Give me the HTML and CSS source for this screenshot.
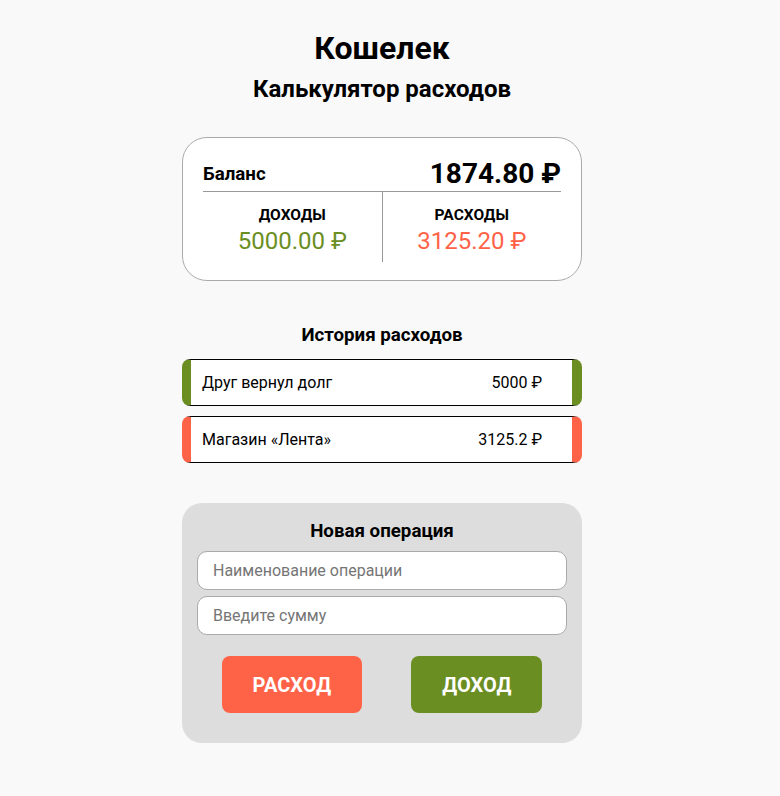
FILE: index.html
```html
<!DOCTYPE html>
<html lang="ru">
<head>
<meta charset="utf-8">
<title>Кошелек</title>
<link rel="stylesheet" href="styles.css">
</head>
<body>
<div class="page">
  <h1 class="title">Кошелек</h1>
  <h2 class="subtitle">Калькулятор расходов</h2>

  <section class="balance">
    <div class="balance-head">
      <span class="balance-label">Баланс</span>
      <span class="balance-value">1874.80 ₽</span>
    </div>
    <div class="balance-split">
      <div class="balance-col">
        <div class="col-label">ДОХОДЫ</div>
        <div class="col-value income">5000.00 ₽</div>
      </div>
      <div class="balance-col divider">
        <div class="col-label">РАСХОДЫ</div>
        <div class="col-value expense">3125.20 ₽</div>
      </div>
    </div>
  </section>

  <section class="history">
    <h3 class="section-title">История расходов</h3>
    <ul class="history-list">
      <li class="history-item plus"><span>Друг вернул долг</span><span class="amount">5000 ₽</span></li>
      <li class="history-item minus"><span>Магазин «Лента»</span><span class="amount">3125.2 ₽</span></li>
    </ul>
  </section>

  <section class="form">
    <h3 class="section-title form-title">Новая операция</h3>
    <input class="field" type="text" placeholder="Наименование операции">
    <input class="field" type="text" placeholder="Введите сумму">
    <div class="buttons">
      <button class="btn btn-expense">РАСХОД</button>
      <button class="btn btn-income">ДОХОД</button>
    </div>
  </section>
</div>
</body>
</html>
```
FILE: styles.css
```css
* { box-sizing: border-box; }
html, body { margin: 0; padding: 0; }
body {
  background: #f9f9f9;
  font-family: Roboto, "Noto Sans", sans-serif;
  color: #000;
}
.page {
  width: 400px;
  margin: 0 0 0 182px;
  padding-top: 26px;
  padding-bottom: 40px;
}
.title {
  margin: 0;
  text-align: center;
  font-size: 32px;
  font-weight: 700;
  line-height: 44px;
}
.subtitle {
  margin: 4px 0 0;
  text-align: center;
  font-size: 24px;
  font-weight: 700;
  line-height: 30px;
}
.balance {
  margin-top: 33px;
  background: #fff;
  border: 1px solid #aaa;
  border-radius: 25px;
  padding: 20px 20px 20px;
  height: 144px;
}
.balance-head {
  display: flex;
  justify-content: space-between;
  align-items: center;
  border-bottom: 1px solid #999;
  padding-bottom: 1px;
}
.balance-label {
  font-size: 18.72px;
  font-weight: 700;
  line-height: 28px;
}
.balance-value {
  font-size: 28px;
  font-weight: 700;
  line-height: 32px;
}
.balance-split {
  display: flex;
}
.balance-col {
  flex: 1;
  text-align: center;
  padding-top: 14px;
  height: 70px;
}
.balance-col.divider {
  border-left: 1px solid #999;
}
.col-label {
  font-size: 15.5px;
  font-weight: 700;
  line-height: 18px;
}
.col-value {
  font-size: 24px;
  line-height: 34px;
}
.income { color: #6b8e23; }
.expense { color: #ff6347; }
.history { margin-top: 42px; }
.section-title {
  margin: 0;
  text-align: center;
  font-size: 18.72px;
  font-weight: 700;
  line-height: 24px;
}
.history-list {
  list-style: none;
  margin: 12px 0 0;
  padding: 0;
  display: flex;
  flex-direction: column;
  gap: 10px;
}
.history-item {
  display: flex;
  justify-content: space-between;
  align-items: center;
  height: 47px;
  background: #fff;
  border: 1px solid #000;
  border-radius: 8px;
  padding: 0 30px 0 11px;
  font-size: 16px;
}
.history-item.plus { border-left: 9px solid #6b8e23; border-right: 10px solid #6b8e23; }
.history-item.minus { border-left: 9px solid #ff6347; border-right: 10px solid #ff6347; }
.form {
  margin-top: 40px;
  background: #dddddd;
  border-radius: 20px;
  padding: 16px 15px 30px;
  display: flex;
  flex-direction: column;
  gap: 6px;
}
.form-title { margin-bottom: 2px; }
.field {
  height: 39px;
  border: 1px solid #aaa;
  border-radius: 10px;
  background: #fff;
  padding: 0 15px;
  font-family: Roboto, "Noto Sans", sans-serif;
  font-size: 16px;
  color: #000;
  outline: none;
}
.field::placeholder { color: #757575; }
.buttons {
  display: flex;
  justify-content: space-around;
  margin-top: 15px;
}
.btn {
  border: none;
  border-radius: 8px;
  height: 57px;
  padding: 0 31px;
  color: #fff;
  font-family: Roboto, "Noto Sans", sans-serif;
  font-size: 20px;
  font-weight: 700;
}
.btn-expense { background: #ff6347; }
.btn-income { background: #6b8e23; }
```
